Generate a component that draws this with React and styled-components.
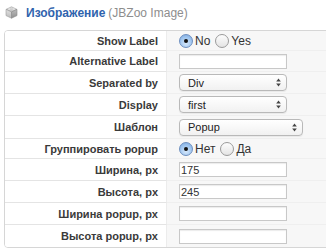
import React from "react";
import styled, { createGlobalStyle } from "styled-components";

const Global = createGlobalStyle`
  html, body { margin: 0; padding: 0; background: #fff; overflow: hidden; }
  body { font-family: "Liberation Sans", Arial, sans-serif; }
`;

const Page = styled.div`
  width: 326px;
  height: 250px;
  overflow: hidden;
`;

const Header = styled.div`
  display: flex;
  align-items: center;
  gap: 8px;
  height: 24px;
  padding: 0 0 0 5px;
`;

const Title = styled.span`
  font-size: 12px;
  font-weight: bold;
  color: #2f63ad;
`;

const Sub = styled.span`
  font-size: 12px;
  color: #8d8d8d;
  margin-left: 3px;
`;

const Table = styled.div`
  margin: 6px 0 0 4px;
  width: 340px;
  display: grid;
  grid-template-columns: 162px 1fr;
  border: 1px solid #d6d6d6;
  border-radius: 4px 0 0 4px;
  overflow: hidden;
`;

const Label = styled.div`
  box-sizing: border-box;
  height: ${(p) => p.$h}px;
  display: flex;
  align-items: center;
  justify-content: flex-end;
  padding-right: 8px;
  font-size: 11px;
  font-weight: bold;
  color: #3a3a3a;
  background: #fff;
  border-bottom: ${(p) => (p.$last ? "none" : "1px solid #e4e4e4")};
  border-right: 1px solid #ececec;
`;

const Field = styled.div`
  box-sizing: border-box;
  height: ${(p) => p.$h}px;
  display: flex;
  align-items: center;
  padding-left: 12px;
  background: #f7f7f7;
  border-bottom: ${(p) => (p.$last ? "none" : "1px solid #efefef")};
`;

const RadioGroup = styled.div`
  display: flex;
  align-items: center;
`;

const RadioLabel = styled.label`
  display: flex;
  align-items: center;
  gap: 2px;
  font-size: 12px;
  color: #333;
  margin-right: 5px;
`;

const RadioDot = styled.span`
  width: 14px;
  height: 14px;
  box-sizing: border-box;
  border-radius: 50%;
  border: 1px solid ${(p) => (p.$on ? "#6d8fbf" : "#9a9a9a")};
  background: ${(p) =>
    p.$on
      ? "radial-gradient(circle at 50% 70%, #d6e8fb 0%, #9cc3ee 60%, #7aa6dc 100%)"
      : "linear-gradient(#fdfdfd, #e4e4e4)"};
  display: flex;
  align-items: center;
  justify-content: center;
  &::after {
    content: "";
    width: 4px;
    height: 4px;
    border-radius: 50%;
    background: #111;
    display: ${(p) => (p.$on ? "block" : "none")};
  }
`;

const TextInput = styled.input`
  box-sizing: border-box;
  width: 108px;
  height: 15px;
  border: 1px solid #c8c8c8;
  box-shadow: inset 0 1px 1px rgba(0, 0, 0, 0.08);
  background: #fff;
  padding: 0 1px;
  font-family: "Liberation Sans", Arial, sans-serif;
  font-size: 11px;
  color: #333;
  outline: none;
`;

const SelectBox = styled.div`
  box-sizing: border-box;
  width: ${(p) => p.$w}px;
  height: 17px;
  border: 1px solid #b9b9b9;
  border-radius: 4px;
  background: linear-gradient(#ffffff, #f1f1f1);
  box-shadow: 0 1px 1px rgba(0, 0, 0, 0.06);
  display: flex;
  align-items: center;
  justify-content: space-between;
  padding: 0 5px 0 8px;
  font-size: 11px;
  color: #222;
`;

const Arrows = styled.svg`
  width: 5px;
  height: 9px;
`;

const Radio = ({ options, value }) => (
  <RadioGroup>
    {options.map((o) => (
      <RadioLabel key={o}>
        <RadioDot $on={o === value} />
        {o}
      </RadioLabel>
    ))}
  </RadioGroup>
);

const Select = ({ value, width }) => (
  <SelectBox $w={width}>
    <span>{value}</span>
    <Arrows viewBox="0 0 5 9">
      <path d="M2.5 0.5 L4.8 3.6 L0.2 3.6 Z" fill="#444" />
      <path d="M2.5 8.5 L4.8 5.4 L0.2 5.4 Z" fill="#444" />
    </Arrows>
  </SelectBox>
);

const Icon = () => (
  <svg width="13" height="13" viewBox="0 0 13 13">
    <defs>
      <linearGradient id="g1" x1="0" y1="0" x2="0" y2="1">
        <stop offset="0" stopColor="#e2e2e2" />
        <stop offset="1" stopColor="#b9b9b9" />
      </linearGradient>
      <linearGradient id="g2" x1="0" y1="0" x2="0" y2="1">
        <stop offset="0" stopColor="#bdbdbd" />
        <stop offset="1" stopColor="#8f8f8f" />
      </linearGradient>
    </defs>
    <path d="M6.5 0.8 L12 3.4 L6.5 6 L1 3.4 Z" fill="url(#g1)" stroke="#9a9a9a" strokeWidth="0.6" />
    <path d="M1 3.4 L6.5 6 L6.5 12.2 L1 9.6 Z" fill="url(#g1)" stroke="#9a9a9a" strokeWidth="0.6" />
    <path d="M12 3.4 L6.5 6 L6.5 12.2 L12 9.6 Z" fill="url(#g2)" stroke="#8a8a8a" strokeWidth="0.6" />
    <ellipse cx="4.2" cy="3" rx="1.1" ry="0.55" fill="#f2f2f2" />
    <ellipse cx="8.8" cy="3" rx="1.1" ry="0.55" fill="#f2f2f2" />
  </svg>
);

const rows = [
  { label: "Show Label", h: 20, el: <Radio options={["No", "Yes"]} value="No" /> },
  { label: "Alternative Label", h: 21, el: <TextInput defaultValue="" /> },
  { label: "Separated by", h: 22, el: <Select value="Div" width={108} /> },
  { label: "Display", h: 22, el: <Select value="first" width={108} /> },
  { label: "Шаблон", h: 23, el: <Select value="Popup" width={124} /> },
  { label: "Группировать popup", h: 20, el: <Radio options={["Нет", "Да"]} value="Нет" /> },
  { label: "Ширина, px", h: 22, el: <TextInput defaultValue="175" /> },
  { label: "Высота, px", h: 22, el: <TextInput defaultValue="245" /> },
  { label: "Ширина popup, px", h: 22, el: <TextInput defaultValue="" /> },
  { label: "Высота popup, px", h: 22, el: <TextInput defaultValue="" /> },
];

export default function App() {
  return (
    <Page>
      <Global />
      <Header>
        <Icon />
        <div>
          <Title>Изображение</Title>
          <Sub>(JBZoo Image)</Sub>
        </div>
      </Header>
      <Table>
        {rows.map((r, i) => (
          <React.Fragment key={r.label}>
            <Label $h={r.h} $last={i === rows.length - 1}>{r.label}</Label>
            <Field $h={r.h} $last={i === rows.length - 1}>{r.el}</Field>
          </React.Fragment>
        ))}
      </Table>
    </Page>
  );
}
